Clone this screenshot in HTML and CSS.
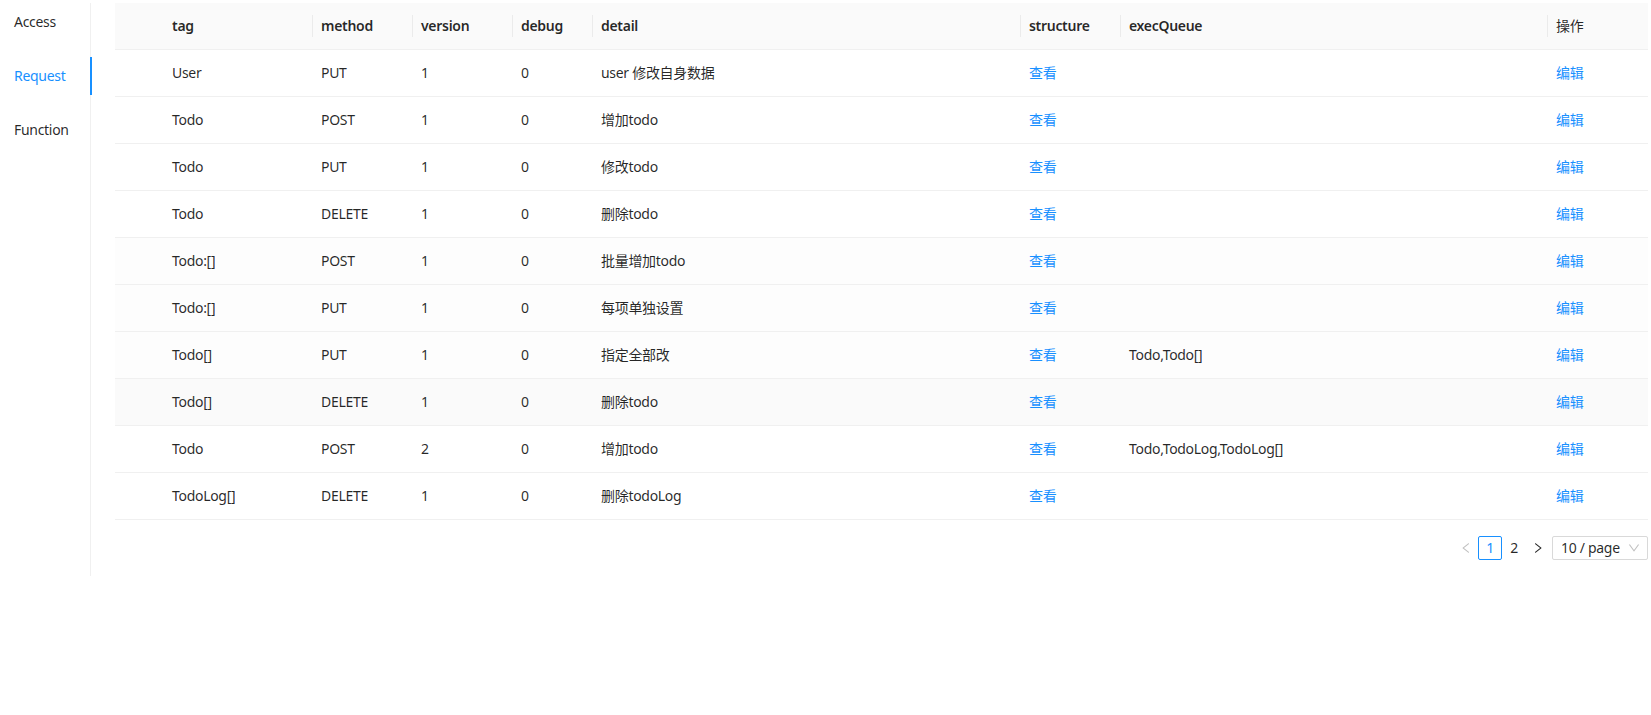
FILE: index.html
```html
<!DOCTYPE html>
<html lang="zh">
<head>
<meta charset="utf-8">
<title>Request</title>
<link rel="stylesheet" href="styles.css">
</head>
<body>
<div class="page">
  <nav class="tabs">
    <div class="tab">Access</div>
    <div class="tab tab-active">Request<span class="ink"></span></div>
    <div class="tab">Function</div>
  </nav>
  <main class="content">
    <table class="grid">
      <colgroup>
        <col class="c-blank"><col class="c-tag"><col class="c-method"><col class="c-version"><col class="c-debug"><col class="c-detail"><col class="c-structure"><col class="c-exec"><col class="c-op">
      </colgroup>
      <thead>
        <tr>
          <th class="nodiv"></th>
          <th>tag</th>
          <th>method</th>
          <th>version</th>
          <th>debug</th>
          <th>detail</th>
          <th>structure</th>
          <th>execQueue</th>
          <th class="nodiv th-cjk">操作</th>
        </tr>
      </thead>
      <tbody>
        <tr><td></td><td>User</td><td>PUT</td><td>1</td><td>0</td><td>user 修改自身数据</td><td><a class="link">查看</a></td><td></td><td><a class="link">编辑</a></td></tr>
        <tr><td></td><td>Todo</td><td>POST</td><td>1</td><td>0</td><td>增加todo</td><td><a class="link">查看</a></td><td></td><td><a class="link">编辑</a></td></tr>
        <tr><td></td><td>Todo</td><td>PUT</td><td>1</td><td>0</td><td>修改todo</td><td><a class="link">查看</a></td><td></td><td><a class="link">编辑</a></td></tr>
        <tr><td></td><td>Todo</td><td>DELETE</td><td>1</td><td>0</td><td>删除todo</td><td><a class="link">查看</a></td><td></td><td><a class="link">编辑</a></td></tr>
        <tr class="fade"><td></td><td>Todo:[]</td><td>POST</td><td>1</td><td>0</td><td>批量增加todo</td><td><a class="link">查看</a></td><td></td><td><a class="link">编辑</a></td></tr>
        <tr class="fade"><td></td><td>Todo:[]</td><td>PUT</td><td>1</td><td>0</td><td>每项单独设置</td><td><a class="link">查看</a></td><td></td><td><a class="link">编辑</a></td></tr>
        <tr class="fade"><td></td><td>Todo[]</td><td>PUT</td><td>1</td><td>0</td><td>指定全部改</td><td><a class="link">查看</a></td><td>Todo,Todo[]</td><td><a class="link">编辑</a></td></tr>
        <tr class="hover"><td></td><td>Todo[]</td><td>DELETE</td><td>1</td><td>0</td><td>删除todo</td><td><a class="link">查看</a></td><td></td><td><a class="link">编辑</a></td></tr>
        <tr><td></td><td>Todo</td><td>POST</td><td>2</td><td>0</td><td>增加todo</td><td><a class="link">查看</a></td><td>Todo,TodoLog,TodoLog[]</td><td><a class="link">编辑</a></td></tr>
        <tr><td></td><td>TodoLog[]</td><td>DELETE</td><td>1</td><td>0</td><td>删除todoLog</td><td><a class="link">查看</a></td><td></td><td><a class="link">编辑</a></td></tr>
      </tbody>
    </table>
    <div class="pager">
      <span class="pg-btn pg-disabled">
        <svg viewBox="64 64 896 896" width="12" height="12"><path fill="currentColor" d="M724 218.3V141c0-6.7-7.7-10.4-12.9-6.3L260.3 486.8a31.86 31.86 0 000 50.3l450.8 352.1c5.3 4.1 12.9.4 12.9-6.3v-77.3c0-4.9-2.3-9.6-6.1-12.6l-360-281 360-281.1c3.8-3 6.1-7.7 6.1-12.6z"/></svg>
      </span>
      <span class="pg-item pg-active">1</span>
      <span class="pg-item">2</span>
      <span class="pg-btn">
        <svg viewBox="64 64 896 896" width="12" height="12"><path fill="currentColor" d="M765.7 486.8L314.9 134.7A7.97 7.97 0 00302 141v77.3c0 4.9 2.3 9.6 6.1 12.6l360 281.1-360 281.1c-3.8 3-6.1 7.7-6.1 12.6V883c0 6.6 7.6 10.3 12.9 6.3l450.8-352.1a31.960 31.960 0 000-50.4z"/></svg>
      </span>
      <span class="pg-select">
        <span class="pg-select-text">10 / page</span>
        <svg class="pg-arrow" viewBox="64 64 896 896" width="12" height="12"><path fill="currentColor" d="M884 256h-75c-5.1 0-9.9 2.5-12.9 6.7L512 654.2 227.9 262.7c-3-4.2-7.8-6.7-12.9-6.7h-75c-6.5 0-10.300 7.4-6.5 12.7l352.6 486.1c12.8 17.6 39 17.6 51.7 0l352.6-486.1c3.9-5.3.1-12.7-6.4-12.7z"/></svg>
      </span>
    </div>
  </main>
</div>
</body>
</html>
```

FILE: styles.css
```css
* { box-sizing: border-box; }

html, body {
  margin: 0;
  padding: 0;
  background: #fff;
}

body {
  font-family: "Noto Sans", "Noto Sans CJK SC", sans-serif;
  font-size: 14px;
  line-height: 22px;
  letter-spacing: -0.3px;
  color: rgba(0, 0, 0, 0.85);
}

.page {
  display: flex;
  align-items: stretch;
  padding-top: 3px;
}

.tabs {
  width: 91px;
  flex: none;
  border-right: 1px solid #f0f0f0;
  display: flex;
  flex-direction: column;
}

.tab {
  position: relative;
  padding: 8px 0 8px 14px;
  color: rgba(0, 0, 0, 0.85);
}

.tab + .tab {
  margin-top: 16px;
}

.tab-active {
  color: #1890ff;
}

.ink {
  position: absolute;
  top: 0;
  right: -2px;
  width: 2px;
  height: 100%;
  background: #1890ff;
}

.content {
  margin-left: 24px;
  width: 1533px;
  flex: none;
  padding-bottom: 16px;
}

.grid {
  width: 100%;
  table-layout: fixed;
  border-collapse: collapse;
  border-spacing: 0;
}

.c-blank { width: 49px; }
.c-tag { width: 149px; }
.c-method { width: 100px; }
.c-version { width: 100px; }
.c-debug { width: 80px; }
.c-detail { width: 428px; }
.c-structure { width: 100px; }
.c-exec { width: 427px; }
.c-op { width: 100px; }

.grid th {
  position: relative;
  text-align: left;
  font-weight: 600;
  background: #fafafa;
  padding: 12px 8px;
  border-bottom: 1px solid #f0f0f0;
  white-space: nowrap;
}

.grid th.th-cjk {
  font-weight: 400;
}

.grid th::before {
  content: "";
  position: absolute;
  right: 0;
  top: 50%;
  width: 1px;
  height: 22px;
  transform: translateY(-50%);
  background: rgba(0, 0, 0, 0.06);
}

.grid th.nodiv::before {
  display: none;
}

.grid td {
  padding: 12px 8px;
  border-bottom: 1px solid #f0f0f0;
  white-space: nowrap;
}

.grid tr.fade td { background: #fdfdfd; }
.grid tr.hover td { background: #fafafa; }

.link {
  color: #1890ff;
  text-decoration: none;
  cursor: pointer;
}

.pager {
  display: flex;
  justify-content: flex-end;
  align-items: center;
  margin-top: 16px;
  height: 24px;
}

.pg-btn,
.pg-item {
  width: 24px;
  height: 24px;
  display: flex;
  align-items: center;
  justify-content: center;
  color: rgba(0, 0, 0, 0.85);
  border: 1px solid transparent;
  border-radius: 2px;
}

.pg-disabled {
  color: rgba(0, 0, 0, 0.25);
}

.pg-active {
  border-color: #1890ff;
  color: #1890ff;
}

.pg-select {
  margin-left: 2px;
  width: 96px;
  height: 24px;
  border: 1px solid #d9d9d9;
  border-radius: 2px;
  display: flex;
  align-items: center;
  justify-content: space-between;
  padding: 0 7px 0 8px;
}

.pg-arrow {
  color: rgba(0, 0, 0, 0.25);
}
```
